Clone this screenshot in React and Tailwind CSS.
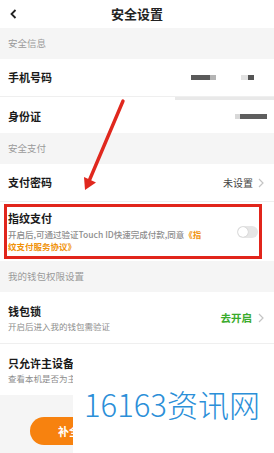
import React from "react";

const font = { fontFamily: '"Noto Sans CJK SC", "Noto Sans", sans-serif' };

function Chevron({ className = "" }) {
  return (
    <svg width="6" height="10" viewBox="0 0 6 10" className={className}>
      <polyline points="1,1 5,5 1,9" fill="none" stroke="#c4c4c4" strokeWidth="1.2" />
    </svg>
  );
}

function Section({ children }) {
  return (
    <div className="h-[31px] flex items-center pl-2 bg-[#f5f5f5] text-[9.5px] text-[#9a9a9a]">
      {children}
    </div>
  );
}

export default function App() {
  return (
    <div
      className="relative w-[274px] h-[453px] overflow-hidden bg-[#f5f5f5] flex flex-col"
      style={font}
    >
      {/* header */}
      <div className="h-[28px] bg-white grid grid-cols-[1fr_auto_1fr] items-center">
        <div className="pl-[10px] flex items-center">
          <svg width="7" height="10" viewBox="0 0 7 10">
            <polyline points="5.5,1 1.5,5 5.5,9" fill="none" stroke="#222" strokeWidth="1.8" />
          </svg>
        </div>
        <div className="text-[13px] font-bold text-[#222]">安全设置</div>
        <div />
      </div>

      <Section>安全信息</Section>

      {/* phone row */}
      <div className="h-[37px] bg-white flex items-center justify-between pl-2">
        <span className="text-[11px] font-bold text-[#1a1a1a]">手机号码</span>
        <div className="flex items-center pr-[20px]">
          <div className="w-[19px] h-[5px] bg-[#5a5a5a]" />
          <div className="w-[6px] h-[5px] bg-[#b4b4b4]" />
          <div className="w-[25px]" />
          <div className="w-[7px] h-[5px] bg-[#e2e2e2]" />
          <div className="w-[6px] h-[5px] bg-[#555]" />
        </div>
      </div>
      <div className="h-[4px] bg-white border-t border-[#efefef] flex">
        <div className="ml-[175px] flex-1 bg-[#e9e9e9]" />
      </div>

      {/* id row */}
      <div className="h-[33px] bg-white flex items-center justify-between pl-2">
        <span className="text-[11px] font-bold text-[#1a1a1a]">身份证</span>
        <div className="flex items-center pr-[7px]">
          <div className="w-[5px] h-[5px] bg-[#d8d8d8]" />
          <div className="w-[27px] h-[5px] bg-[#5e5e5e]" />
        </div>
      </div>

      <Section>安全支付</Section>

      {/* pay password */}
      <div className="h-[37px] bg-white flex items-center justify-between pl-2 pr-[10px]">
        <span className="text-[11px] font-bold text-[#1a1a1a]">支付密码</span>
        <div className="flex items-center gap-[5px]">
          <span className="text-[10px] text-[#444]">未设置</span>
          <Chevron />
        </div>
      </div>
      <div className="h-px bg-[#efefef]" />

      {/* fingerprint */}
      <div className="h-[59px] bg-white flex items-center justify-between pl-2 pr-[16px]">
        <div className="flex flex-col">
          <span className="text-[11px] leading-[14px] font-bold text-[#1a1a1a]">指纹支付</span>
          <span className="mt-[3px] text-[8.5px] leading-[12px] font-medium text-[#8c8c8c] whitespace-nowrap">
            开启后,可通过验证Touch ID快速完成付款,同意
            <span className="text-[#f0920a] font-bold">《指</span>
            <br />
            <span className="text-[#f0920a] font-bold">纹支付服务协议》</span>
          </span>
        </div>
        <div className="w-[21px] h-[12px] rounded-full bg-[#e6e6e6] flex items-center px-[1px]">
          <div className="w-[10px] h-[10px] rounded-full bg-white shadow-[0_0_1px_rgba(0,0,0,0.3)]" />
        </div>
      </div>

      <Section>我的钱包权限设置</Section>

      {/* wallet lock */}
      <div className="h-[51px] bg-white flex items-center justify-between pl-2 pr-[10px]">
        <div className="flex flex-col gap-[2px]">
          <span className="text-[11px] leading-[14px] font-bold text-[#1a1a1a]">钱包锁</span>
          <span className="text-[8.5px] leading-[12px] text-[#8c8c8c]">开启后进入我的钱包需验证</span>
        </div>
        <div className="flex items-center gap-[6px]">
          <span className="text-[10.5px] font-bold text-[#3aab2c]">去开启</span>
          <Chevron />
        </div>
      </div>
      <div className="h-px bg-[#efefef]" />

      {/* main device */}
      <div className="h-[51px] bg-white flex items-center pl-2">
        <div className="flex flex-col gap-[2px]">
          <span className="text-[11px] leading-[14px] font-bold text-[#1a1a1a]">只允许主设备访问</span>
          <span className="text-[8.5px] leading-[12px] text-[#8c8c8c]">查看本机是否为主设备</span>
        </div>
      </div>

      {/* bottom */}
      <div className="flex-1 bg-[#f5f5f5] pt-[22px] pl-[30px]">
        <div className="w-[100px] h-[28px] rounded-full bg-[#f7820f] flex items-center justify-center text-[11px] font-bold text-white">
          补全资料
        </div>
      </div>

      {/* overlays: red box */}
      <div className="absolute left-[4px] top-[204px] w-[258px] h-[55px] border-[3px] border-[#e1251b] pointer-events-none" />

      {/* red arrow */}
      <svg className="absolute left-0 top-0 pointer-events-none" width="274" height="453">
        <line x1="123" y1="101" x2="89.5" y2="180" stroke="#e0281e" strokeWidth="3.4" strokeLinecap="round" />
        <polygon points="85,190 84,177 96,182.5" fill="#e0281e" />
      </svg>

      {/* watermark */}
      <div className="absolute left-[73px] top-[353px] right-0 bottom-0 bg-white pl-[11px] pt-[35px]">
        <span className="text-[31px] leading-none font-light text-[#2b8fd8] whitespace-nowrap">16163资讯网</span>
      </div>
    </div>
  );
}
